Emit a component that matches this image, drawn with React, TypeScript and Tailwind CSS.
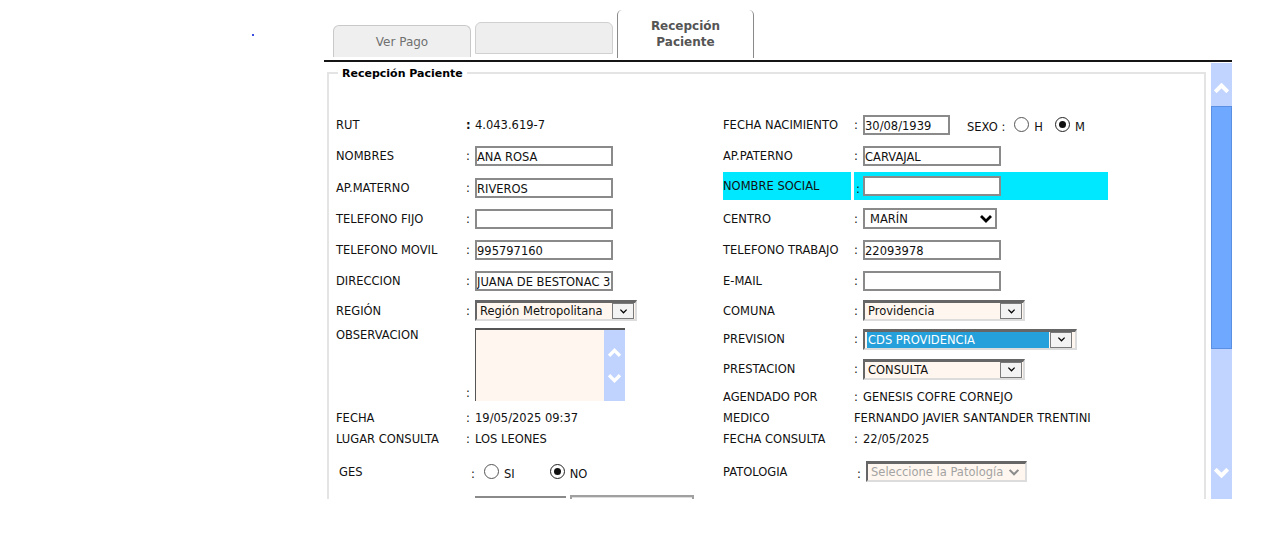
import React from "react";

function Chevron({ up, className, w = "2.4" }: { up?: boolean; className: string; w?: string }) {
  return (
    <svg viewBox="0 0 12 8" className={className} fill="none">
      <polyline
        points={up ? "1,7 6,2 11,7" : "1,1 6,6 11,1"}
        stroke="currentColor"
        strokeWidth={w}
        strokeLinejoin="miter"
      />
    </svg>
  );
}

function Input({ className, value }: { className: string; value?: string }) {
  return (
    <div
      className={
        "h-[20px] shrink-0 overflow-hidden whitespace-nowrap border-2 border-[#8a8a8a] bg-white pt-[2px] leading-[14px] " +
        className
      }
    >
      {value}
    </div>
  );
}

function SelectButton() {
  return (
    <div className="flex h-[16px] w-[22px] shrink-0 items-center justify-center border border-[#7a7a7a] bg-[#f3f3f3]">
      <Chevron className="h-[5px] w-[9px] text-black" w="2" />
    </div>
  );
}

function CreamSelect({ className, children }: { className: string; children: React.ReactNode }) {
  return (
    <div
      className={
        "flex h-[21px] shrink-0 items-center border-2 border-t-[3px] border-b-[#dcdcdc] border-l-[#666] border-r-[#dcdcdc] border-t-[#666] bg-[#fff7ef] " +
        className
      }
    >
      {children}
    </div>
  );
}

function Radio({ checked }: { checked?: boolean }) {
  return (
    <span
      className={
        "flex h-[15px] w-[15px] shrink-0 items-center justify-center rounded-full border bg-white " +
        (checked ? "border-[#222]" : "border-[#555]")
      }
    >
      {checked && <span className="h-[7px] w-[7px] rounded-full bg-[#111]" />}
    </span>
  );
}

function L({ children }: { children: React.ReactNode }) {
  return <span className="w-[130px] shrink-0">{children}</span>;
}

function R({ children }: { children: React.ReactNode }) {
  return <span className="w-[131px] shrink-0">{children}</span>;
}

function C({ bold }: { bold?: boolean }) {
  return <span className={"w-[9px] shrink-0" + (bold ? " font-bold" : "")}>:</span>;
}

function Row({ h, left, right }: { h: string; left: React.ReactNode; right: React.ReactNode }) {
  return (
    <div className={"flex " + h}>
      <div className="flex w-[387px] shrink-0 items-center">{left}</div>
      <div className="flex flex-1 items-center">{right}</div>
    </div>
  );
}

export default function App() {
  return (
    <div className="relative h-[541px] w-[1262px] overflow-hidden bg-white font-['DejaVu_Sans',sans-serif] text-[#111]">
      <span className="absolute left-[252px] top-[34px] h-[2px] w-[2px] bg-[#3b4fe0]" />

      <div className="ml-[324px] w-[908px]">
        {/* tabs */}
        <div className="flex h-[60px] items-end gap-[4px] pl-[9px]">
          <div className="mb-[3px] flex h-[32px] w-[138px] items-center justify-center rounded-t-[6px] border border-b-0 border-[#c9c9c9] bg-[#efefef] text-[12px] text-[#707070]">
            Ver Pago
          </div>
          <div className="mb-[6px] h-[32px] w-[138px] rounded-t-[6px] border border-[#d0d0d0] bg-[#eeeeee]" />
          <div className="mb-[2px] flex h-[48px] w-[137px] flex-col items-center rounded-t-[5px] border-x border-[#8a8a8a] bg-white pt-[8px] text-[12px] font-bold leading-[16px] text-[#555]">
            <span>Recepción</span>
            <span>Paciente</span>
          </div>
        </div>
        <div className="h-[2px] bg-[#151515]" />

        {/* frame */}
        <div className="flex h-[437px] overflow-hidden">
          <div className="relative ml-[3px] mt-[10px] h-[600px] w-[879px] shrink-0 border-2 border-[#e4e4e4] pl-[7px] pt-[35px] text-[11.5px] leading-[14px]">
            <span className="absolute left-[9px] top-[-7px] bg-white px-[4px] text-[11px] font-bold leading-[13px] text-black">
              Recepción Paciente
            </span>

            <Row
              h="h-[31px]"
              left={
                <>
                  <L>RUT</L>
                  <C bold />
                  <span>4.043.619-7</span>
                </>
              }
              right={
                <>
                  <R>FECHA NACIMIENTO</R>
                  <C />
                  <Input className="w-[87px]" value="30/08/1939" />
                  <span className="ml-[17px] mt-[5px]">SEXO :</span>
                  <span className="ml-[9px]">
                    <Radio />
                  </span>
                  <span className="ml-[5px] mt-[5px]">H</span>
                  <span className="ml-[12px]">
                    <Radio checked />
                  </span>
                  <span className="ml-[5px] mt-[5px]">M</span>
                </>
              }
            />
            <Row
              h="h-[32px]"
              left={
                <>
                  <L>NOMBRES</L>
                  <C />
                  <Input className="w-[138px]" value="ANA ROSA" />
                </>
              }
              right={
                <>
                  <R>AP.PATERNO</R>
                  <C />
                  <Input className="w-[138px]" value="CARVAJAL" />
                </>
              }
            />
            <div className="flex h-[31px]">
              <div className="flex w-[387px] shrink-0 items-center">
                <L>AP.MATERNO</L>
                <C />
                <Input className="w-[138px]" value="RIVEROS" />
              </div>
              <div className="flex h-[28px] items-stretch">
                <div className="flex w-[128px] items-center bg-[#00e8ff]">NOMBRE SOCIAL</div>
                <div className="ml-[3px] flex w-[254px] items-center bg-[#00e8ff]">
                  <span className="mt-[5px] w-[9px] shrink-0 pl-[2px]">:</span>
                  <Input className="w-[138px]" />
                </div>
              </div>
            </div>
            <Row
              h="h-[31px]"
              left={
                <>
                  <L>TELEFONO FIJO</L>
                  <C />
                  <Input className="w-[138px]" />
                </>
              }
              right={
                <>
                  <R>CENTRO</R>
                  <C />
                  <div className="flex h-[21px] w-[134px] items-center border-2 border-[#8a8a8a] bg-white pl-[5px]">
                    <span className="flex-1">MARÍN</span>
                    <Chevron className="mr-[3px] h-[8px] w-[12px] text-black" w="2.8" />
                  </div>
                </>
              }
            />
            <Row
              h="h-[31px]"
              left={
                <>
                  <L>TELEFONO MOVIL</L>
                  <C />
                  <Input className="w-[138px]" value="995797160" />
                </>
              }
              right={
                <>
                  <R>TELEFONO TRABAJO</R>
                  <C />
                  <Input className="w-[138px]" value="22093978" />
                </>
              }
            />
            <Row
              h="h-[31px]"
              left={
                <>
                  <L>DIRECCION</L>
                  <C />
                  <Input className="w-[138px]" value="JUANA DE BESTONAC 3" />
                </>
              }
              right={
                <>
                  <R>E-MAIL</R>
                  <C />
                  <Input className="w-[138px]" />
                </>
              }
            />
            <Row
              h="h-[29px]"
              left={
                <>
                  <L>REGIÓN</L>
                  <C />
                  <CreamSelect className="w-[162px]">
                    <span className="flex-1 whitespace-nowrap pl-[3px]">Región Metropolitana</span>
                    <span className="mr-[1px]">
                      <SelectButton />
                    </span>
                  </CreamSelect>
                </>
              }
              right={
                <>
                  <R>COMUNA</R>
                  <C />
                  <CreamSelect className="w-[162px]">
                    <span className="flex-1 pl-[3px]">Providencia</span>
                    <span className="mr-[1px]">
                      <SelectButton />
                    </span>
                  </CreamSelect>
                </>
              }
            />

            {/* observacion block */}
            <div className="flex h-[83px]">
              <div className="flex w-[387px] shrink-0 items-start">
                <span className="w-[130px] shrink-0 pt-[3px]">OBSERVACION</span>
                <span className="mb-[8px] w-[9px] shrink-0 self-end">:</span>
                <div className="mt-[3px] flex h-[73px] w-[150px] border-l border-t-2 border-[#555] bg-[#fff7ef]">
                  <div className="flex-1" />
                  <div className="flex w-[21px] flex-col items-center bg-[#c0d3ff] pt-[18px] text-white">
                    <Chevron up className="h-[9px] w-[13px]" w="3" />
                    <Chevron className="mt-[17px] h-[9px] w-[13px]" w="3" />
                  </div>
                </div>
              </div>
              <div className="flex flex-col">
                <div className="flex h-[28px] items-center">
                  <R>PREVISION</R>
                  <C />
                  <CreamSelect className="w-[214px]">
                    <span className="ml-[2px] flex h-full w-[182px] items-center bg-[#26a0da] pl-[1px] text-white">
                      CDS PROVIDENCIA
                    </span>
                    <span className="ml-[1px]">
                      <SelectButton />
                    </span>
                  </CreamSelect>
                </div>
                <div className="flex h-[32px] items-center">
                  <R>PRESTACION</R>
                  <C />
                  <CreamSelect className="w-[162px]">
                    <span className="flex-1 pl-[3px]">CONSULTA</span>
                    <span className="mr-[1px]">
                      <SelectButton />
                    </span>
                  </CreamSelect>
                </div>
                <div className="flex h-[23px] items-center">
                  <R>AGENDADO POR</R>
                  <C />
                  <span>GENESIS COFRE CORNEJO</span>
                </div>
              </div>
            </div>

            <Row
              h="h-[20px]"
              left={
                <>
                  <L>FECHA</L>
                  <C />
                  <span>19/05/2025 09:37</span>
                </>
              }
              right={
                <>
                  <R>MEDICO</R>
                  <span className="whitespace-nowrap">FERNANDO JAVIER SANTANDER TRENTINI</span>
                </>
              }
            />
            <Row
              h="h-[22px]"
              left={
                <>
                  <L>LUGAR CONSULTA</L>
                  <C />
                  <span>LOS LEONES</span>
                </>
              }
              right={
                <>
                  <R>FECHA CONSULTA</R>
                  <C />
                  <span>22/05/2025</span>
                </>
              }
            />
            <Row
              h="h-[43px]"
              left={
                <>
                  <span className="w-[135px] shrink-0 pl-[3px]">GES</span>
                  <span className="mt-[5px] w-[13px] shrink-0">:</span>
                  <Radio />
                  <span className="ml-[5px] mt-[5px]">SI</span>
                  <span className="ml-[35px]">
                    <Radio checked />
                  </span>
                  <span className="ml-[5px] mt-[5px]">NO</span>
                </>
              }
              right={
                <>
                  <span className="w-[134px] shrink-0">PATOLOGIA</span>
                  <span className="mt-[4px] w-[9px] shrink-0">:</span>
                  <CreamSelect className="w-[161px]">
                    <span className="flex-1 whitespace-nowrap pl-[3px] text-[#a3a3a3]">Seleccione la Patología</span>
                    <Chevron className="mr-[5px] h-[7px] w-[12px] text-[#8c8c8c]" w="2.4" />
                  </CreamSelect>
                </>
              }
            />
            <div className="flex items-start pl-[139px]">
              <div className="mt-[3px] h-[20px] w-[91px] border-t-2 border-[#8a8a8a]" />
              <div className="ml-[4px] mt-[2px] h-[20px] w-[124px] border-2 border-[#a0a0a0] shadow-[inset_0_1px_0_#ddd]" />
            </div>
          </div>

          {/* scrollbar */}
          <div className="ml-[5px] mt-[1px] flex h-[436px] w-[21px] shrink-0 flex-col bg-[#c1d4ff] text-white">
            <div className="flex h-[43px] items-center justify-center pt-[6px]">
              <Chevron up className="h-[10px] w-[15px]" w="3.2" />
            </div>
            <div className="h-[243px] border border-[#5b8fe3] bg-[#6ea8ff]" />
            <div className="flex flex-1 items-end justify-center pb-[21px]">
              <Chevron className="h-[10px] w-[15px]" w="3.2" />
            </div>
          </div>
        </div>
      </div>
    </div>
  );
}
